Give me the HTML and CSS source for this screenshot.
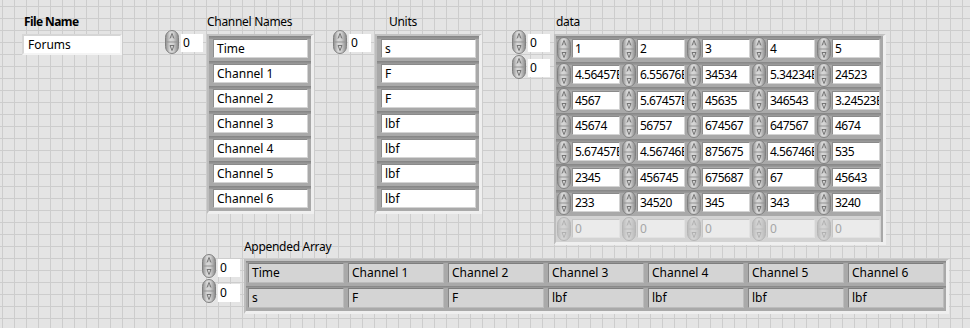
FILE: index.html
```html
<!DOCTYPE html>
<html lang="en">

<head>
  <meta charset="UTF-8">
  <title>Front Panel</title>
  <link rel="stylesheet" href="styles.css">
</head>

<body>
  <svg class="defs" width="0" height="0">
    <defs>
      <linearGradient id="spinFill" x1="0" x2="1" y1="0" y2="0">
        <stop offset="0" stop-color="#8e8e8e" />
        <stop offset="0.35" stop-color="#d9d9d9" />
        <stop offset="0.6" stop-color="#d0d0d0" />
        <stop offset="1" stop-color="#888888" />
      </linearGradient>
      <symbol id="spin" viewBox="0 0 14 24">
        <rect x="0.5" y="0.5" width="13" height="23" rx="6.5" ry="7" fill="url(#spinFill)" stroke="#808080" />
        <path d="M1.5 12H12.5" stroke="#939393" />
        <path d="M7 3.5L5 8.5M7 3.5L9 8.5M6.6 7H7.4" fill="none" stroke="#6a6a6a" stroke-width="0.9" />
        <path d="M5 15.5H9L7 20.5Z" fill="none" stroke="#6a6a6a" stroke-width="0.9" />
      </symbol>
    </defs>
  </svg>

  <div class="panel">
    <div class="top">
      <div class="file">
        <div class="lbl">File Name</div>
        <div class="str">Forums</div>
      </div>

      <div class="ctl names">
        <div class="lbl">Channel Names</div>
        <div class="idxs">
          <div class="idx"><svg><use href="#spin" /></svg><span class="num">0</span></div>
        </div>
        <div class="frame list">
          <div class="cell"><div class="box">Time</div></div>
          <div class="cell"><div class="box">Channel 1</div></div>
          <div class="cell"><div class="box">Channel 2</div></div>
          <div class="cell"><div class="box">Channel 3</div></div>
          <div class="cell"><div class="box">Channel 4</div></div>
          <div class="cell"><div class="box">Channel 5</div></div>
          <div class="cell"><div class="box">Channel 6</div></div>
        </div>
      </div>

      <div class="ctl units">
        <div class="lbl">Units</div>
        <div class="idxs">
          <div class="idx"><svg><use href="#spin" /></svg><span class="num">0</span></div>
        </div>
        <div class="frame list">
          <div class="cell"><div class="box">s</div></div>
          <div class="cell"><div class="box">F</div></div>
          <div class="cell"><div class="box">F</div></div>
          <div class="cell"><div class="box">lbf</div></div>
          <div class="cell"><div class="box">lbf</div></div>
          <div class="cell"><div class="box">lbf</div></div>
          <div class="cell"><div class="box">lbf</div></div>
        </div>
      </div>

      <div class="ctl data">
        <div class="lbl">data</div>
        <div class="idxs">
          <div class="idx"><svg><use href="#spin" /></svg><span class="num">0</span></div>
          <div class="idx"><svg><use href="#spin" /></svg><span class="num">0</span></div>
        </div>
        <div class="frame table" id="dataTable"></div>
      </div>
    </div>

    <div class="ctl appended">
      <div class="lbl">Appended Array</div>
      <div class="idxs">
        <div class="idx"><svg><use href="#spin" /></svg><span class="num">0</span></div>
        <div class="idx"><svg><use href="#spin" /></svg><span class="num">0</span></div>
      </div>
      <div class="frame out">
        <div class="acell"><div class="box">Time</div></div>
        <div class="acell"><div class="box">Channel 1</div></div>
        <div class="acell"><div class="box">Channel 2</div></div>
        <div class="acell"><div class="box">Channel 3</div></div>
        <div class="acell"><div class="box">Channel 4</div></div>
        <div class="acell"><div class="box">Channel 5</div></div>
        <div class="acell"><div class="box">Channel 6</div></div>
        <div class="acell"><div class="box">s</div></div>
        <div class="acell"><div class="box">F</div></div>
        <div class="acell"><div class="box">F</div></div>
        <div class="acell"><div class="box">lbf</div></div>
        <div class="acell"><div class="box">lbf</div></div>
        <div class="acell"><div class="box">lbf</div></div>
        <div class="acell"><div class="box">lbf</div></div>
      </div>
    </div>
  </div>

  <script>
    const rows = [
      ["1", "2", "3", "4", "5"],
      ["4.56457E", "6.55676E", "34534", "5.34234E", "24523"],
      ["4567", "5.67457E", "45635", "346543", "3.24523E"],
      ["45674", "56757", "674567", "647567", "4674"],
      ["5.67457E", "4.56746E", "875675", "4.56746E", "535"],
      ["2345", "456745", "675687", "67", "45643"],
      ["233", "34520", "345", "343", "3240"]
    ]

    let html = ""
    rows.forEach(r => {
      r.forEach(v => {
        html += `<div class="dcell"><svg><use href="#spin" /></svg><div class="box">${v}</div></div>`
      })
    })
    for (let i = 0; i < 5; i++) {
      html += `<div class="dcell off"><svg><use href="#spin" /></svg><div class="box">0</div></div>`
    }
    document.getElementById("dataTable").innerHTML = html
  </script>
</body>

</html>
```

FILE: styles.css
```css
* {
  box-sizing: border-box;
}

body {
  margin: 0;
  font-family: "Noto Sans", "Open Sans", sans-serif;
  font-size: 12px;
  color: #000;
  background-color: #e4e4e4;
  background-image:
    linear-gradient(to right, #cdcdcd 1px, transparent 1px),
    linear-gradient(to bottom, #cdcdcd 1px, transparent 1px);
  background-size: 12px 12px;
  background-position: 2px 6px;
  height: 328px;
  overflow: hidden;
}

.defs {
  display: block;
  height: 0;
}

.panel {
  padding-top: 14px;
}

.top {
  display: flex;
  align-items: flex-start;
}

.lbl {
  grid-column: 2;
  height: 16px;
  line-height: 16px;
  margin-bottom: 4px;
  white-space: nowrap;
  letter-spacing: -0.3px;
}

/* string control */
.file {
  margin-left: 22px;
}

.file .lbl {
  font-weight: bold;
  margin-left: 2px;
  letter-spacing: -0.6px;
}

.str {
  width: 100px;
  height: 21px;
  padding-left: 4px;
  line-height: 17px;
  background: #fff;
  border: 2px solid;
  border-color: #d6d6d6 #f4f4f4 #f4f4f4 #d6d6d6;
}

/* array controls */
.ctl {
  display: grid;
  grid-template-columns: auto auto;
  justify-content: start;
  column-gap: 4px;
  align-items: start;
}

.names {
  margin-left: 43px;
}

.units {
  margin-left: 19px;
}

.units .lbl {
  padding-left: 14px;
}

.data {
  margin-left: 30px;
}

.data .lbl {
  padding-left: 2px;
}

.idxs {
  grid-row: 2;
  grid-column: 1;
  display: flex;
  flex-direction: column;
  margin-top: -5px;
}

.idx {
  display: flex;
  align-items: center;
  height: 25px;
  gap: 1px;
}

.idx svg {
  width: 14px;
  height: 24px;
}

.num {
  width: 23px;
  height: 18px;
  margin-top: 3px;
  padding-left: 2px;
  line-height: 18px;
  background: #fff;
  border-left: 1px solid #e8e8e8;
}

.frame {
  grid-row: 2;
  grid-column: 2;
  background: #a7a7a7;
  border-style: solid;
  border-width: 2px 3px 3px 2px;
  border-color: #c2c2c2 #efefef #efefef #bdbdbd;
}

.box {
  height: 19px;
  padding-left: 3px;
  line-height: 17px;
  white-space: nowrap;
  overflow: hidden;
  background: #fff;
  border: 1px solid;
  border-color: #8a8a8a #d4d4d4 #d4d4d4 #8e8e8e;
}

/* 1D lists */
.list {
  width: 107px;
}

.cell {
  height: 25px;
  padding: 3px 3px 3px 4px;
  background: linear-gradient(#838383, #9c9c9c 3px, #a9a9a9 3px);
}

/* 2D data */
.table {
  display: grid;
  grid-template-columns: repeat(5, 65px);
  grid-auto-rows: 25.7px;
  padding-right: 2px;
}

.dcell {
  display: flex;
  align-items: center;
  gap: 1px;
  padding-left: 1px;
  background: linear-gradient(#858585, #9d9d9d 3px, #a9a9a9 3px);
}

.dcell svg {
  width: 14px;
  height: 24px;
  flex: none;
}

.dcell .box {
  width: 48px;
  padding-left: 2px;
  letter-spacing: -0.5px;
}

.dcell.off {
  background: #d3d3d3;
}

.dcell.off svg {
  opacity: 0.35;
}

.dcell.off .box {
  color: #a6a6a6;
  background: #ebebeb;
  border-color: #c6c6c6 #e2e2e2 #e2e2e2 #c6c6c6;
}

/* appended indicator */
.appended {
  margin-left: 202px;
  margin-top: -6px;
}

.out {
  display: grid;
  grid-template-columns: repeat(7, 100px);
  grid-auto-rows: 25px;
}

.acell {
  padding: 2px 2px 3px 2px;
  background: linear-gradient(#838383, #9c9c9c 2px, #a9a9a9 2px);
}

.acell .box {
  height: 20px;
  line-height: 18px;
  background: #d4d4d4;
  border-color: #7e7e7e #bcbcbc #bcbcbc #868686;
}
```
